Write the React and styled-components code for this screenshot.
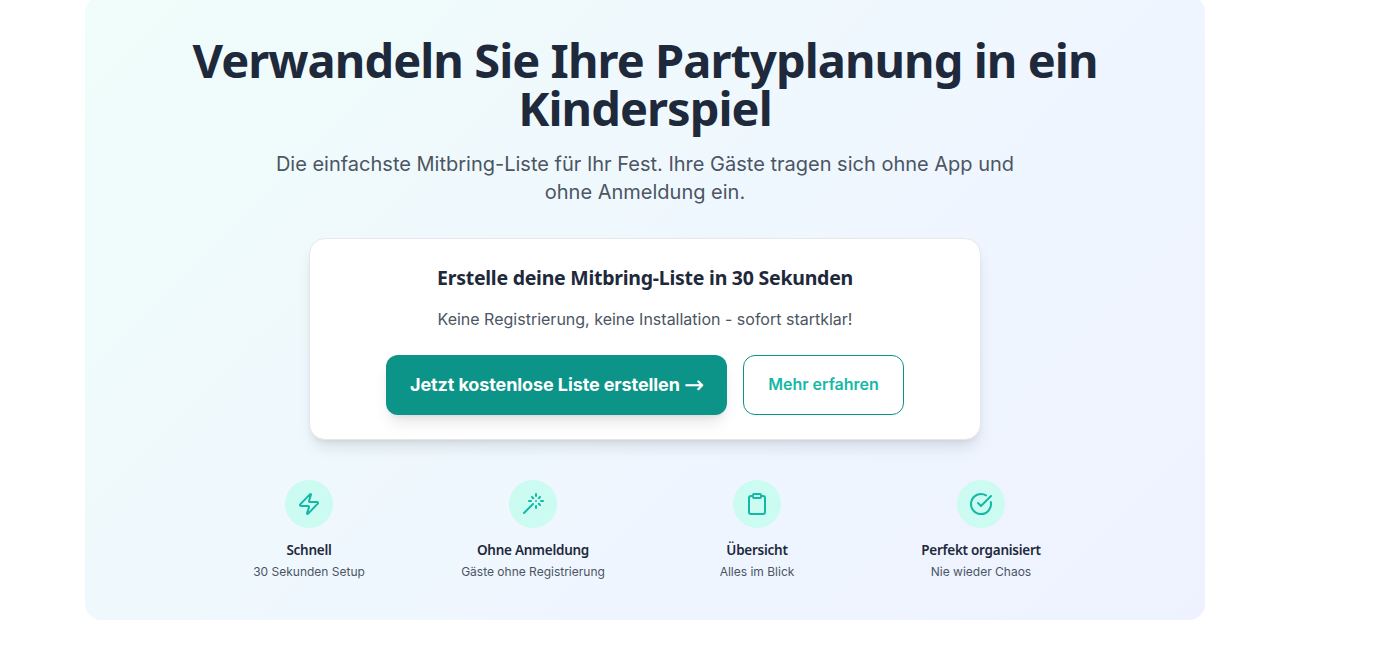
import React from "react";
import styled, { createGlobalStyle } from "styled-components";
import { Zap, Wand, Clipboard, CircleCheckBig } from "lucide-react";

const GlobalStyle = createGlobalStyle`
  html, body {
    margin: 0;
    padding: 0;
    background: #ffffff;
    overflow: hidden;
    font-family: "Inter", "Liberation Sans", sans-serif;
  }
`;

const Page = styled.div`
  width: 1400px;
  height: 657px;
  overflow: hidden;
`;

const Hero = styled.section`
  box-sizing: border-box;
  width: 1120px;
  height: 624px;
  margin: -4px 0 0 85px;
  padding-top: 40px;
  border-radius: 16px;
  background: linear-gradient(135deg, #f0fdfa 0%, #eff6ff 60%, #eef2ff 100%);
  display: flex;
  flex-direction: column;
  align-items: center;
`;

const Title = styled.h1`
  margin: 0;
  width: 1024px;
  font-family: "Noto Sans", sans-serif;
  font-size: 47px;
  line-height: 48px;
  font-weight: 700;
  letter-spacing: -0.95px;
  color: #1e293b;
  text-align: center;
`;

const Subtitle = styled.p`
  margin: 18px 0 0;
  width: 768px;
  font-size: 20px;
  line-height: 28px;
  color: #4b5563;
  text-align: center;
`;

const Card = styled.div`
  box-sizing: border-box;
  width: 672px;
  margin-top: 32px;
  padding: 24px;
  background: #ffffff;
  border: 1px solid #e5e7eb;
  border-radius: 16px;
  box-shadow: 0 10px 15px -3px rgba(0, 0, 0, 0.1), 0 4px 6px -4px rgba(0, 0, 0, 0.1);
  display: flex;
  flex-direction: column;
  align-items: center;
`;

const CardTitle = styled.h2`
  margin: 1px 0 0;
  font-family: "Noto Sans", sans-serif;
  font-size: 19.5px;
  line-height: 28px;
  font-weight: 700;
  letter-spacing: -0.25px;
  color: #1e293b;
`;

const CardText = styled.p`
  margin: 15px 0 0;
  font-size: 16px;
  line-height: 24px;
  color: #4b5563;
`;

const Actions = styled.div`
  display: flex;
  gap: 16px;
  margin-top: 24px;
`;

const PrimaryButton = styled.button`
  width: 341px;
  height: 60px;
  padding: 0 0 2px;
  border: none;
  border-radius: 12px;
  background: #0d9488;
  color: #ffffff;
  font-family: "Inter", sans-serif;
  font-size: 18px;
  font-weight: 700;
  letter-spacing: -0.1px;
  box-shadow: 0 10px 15px -3px rgba(0, 0, 0, 0.1), 0 4px 6px -4px rgba(0, 0, 0, 0.1);
`;

const Arrow = styled.span`
  margin-right: -1px;
  font-family: "DejaVu Sans", sans-serif;
  font-size: 24px;
  line-height: 0;
  font-weight: 400;
  vertical-align: -2px;
`;

const SecondaryButton = styled.button`
  box-sizing: border-box;
  width: 161px;
  height: 60px;
  padding: 0 0 2px;
  border: 1px solid #0d9488;
  border-radius: 12px;
  background: #ffffff;
  color: #14b8a6;
  font-family: "Inter", sans-serif;
  font-size: 16px;
  font-weight: 600;
`;

const Features = styled.div`
  width: 896px;
  margin-top: 40px;
  display: grid;
  grid-template-columns: repeat(4, 1fr);
`;

const Feature = styled.div`
  display: flex;
  flex-direction: column;
  align-items: center;
`;

const IconCircle = styled.div`
  width: 48px;
  height: 48px;
  border-radius: 50%;
  background: #ccfbf1;
  color: #14b8a6;
  display: flex;
  align-items: center;
  justify-content: center;
`;

const FeatureTitle = styled.div`
  margin-top: 12px;
  font-family: "Noto Sans", sans-serif;
  font-size: 13.5px;
  line-height: 20px;
  font-weight: 600;
  letter-spacing: -0.26px;
  color: #1e293b;
`;

const FeatureText = styled.div`
  margin-top: 2px;
  font-size: 12px;
  line-height: 20px;
  color: #4b5563;
`;

const features = [
  { icon: Zap, title: "Schnell", text: "30 Sekunden Setup" },
  { icon: Wand, title: "Ohne Anmeldung", text: "Gäste ohne Registrierung" },
  { icon: Clipboard, title: "Übersicht", text: "Alles im Blick" },
  { icon: CircleCheckBig, title: "Perfekt organisiert", text: "Nie wieder Chaos" },
];

const App = () => {
  return (
    <Page>
      <GlobalStyle />
      <Hero>
        <Title>Verwandeln Sie Ihre Partyplanung in ein Kinderspiel</Title>
        <Subtitle>
          Die einfachste Mitbring-Liste für Ihr Fest. Ihre Gäste tragen sich ohne App und ohne Anmeldung ein.
        </Subtitle>
        <Card>
          <CardTitle>Erstelle deine Mitbring-Liste in 30 Sekunden</CardTitle>
          <CardText>Keine Registrierung, keine Installation - sofort startklar!</CardText>
          <Actions>
            <PrimaryButton>
              Jetzt kostenlose Liste erstellen <Arrow>→</Arrow>
            </PrimaryButton>
            <SecondaryButton>Mehr erfahren</SecondaryButton>
          </Actions>
        </Card>
        <Features>
          {features.map(({ icon: Icon, title, text }) => (
            <Feature key={title}>
              <IconCircle>
                <Icon size={24} strokeWidth={2} />
              </IconCircle>
              <FeatureTitle>{title}</FeatureTitle>
              <FeatureText>{text}</FeatureText>
            </Feature>
          ))}
        </Features>
      </Hero>
    </Page>
  );
};

export default App;
